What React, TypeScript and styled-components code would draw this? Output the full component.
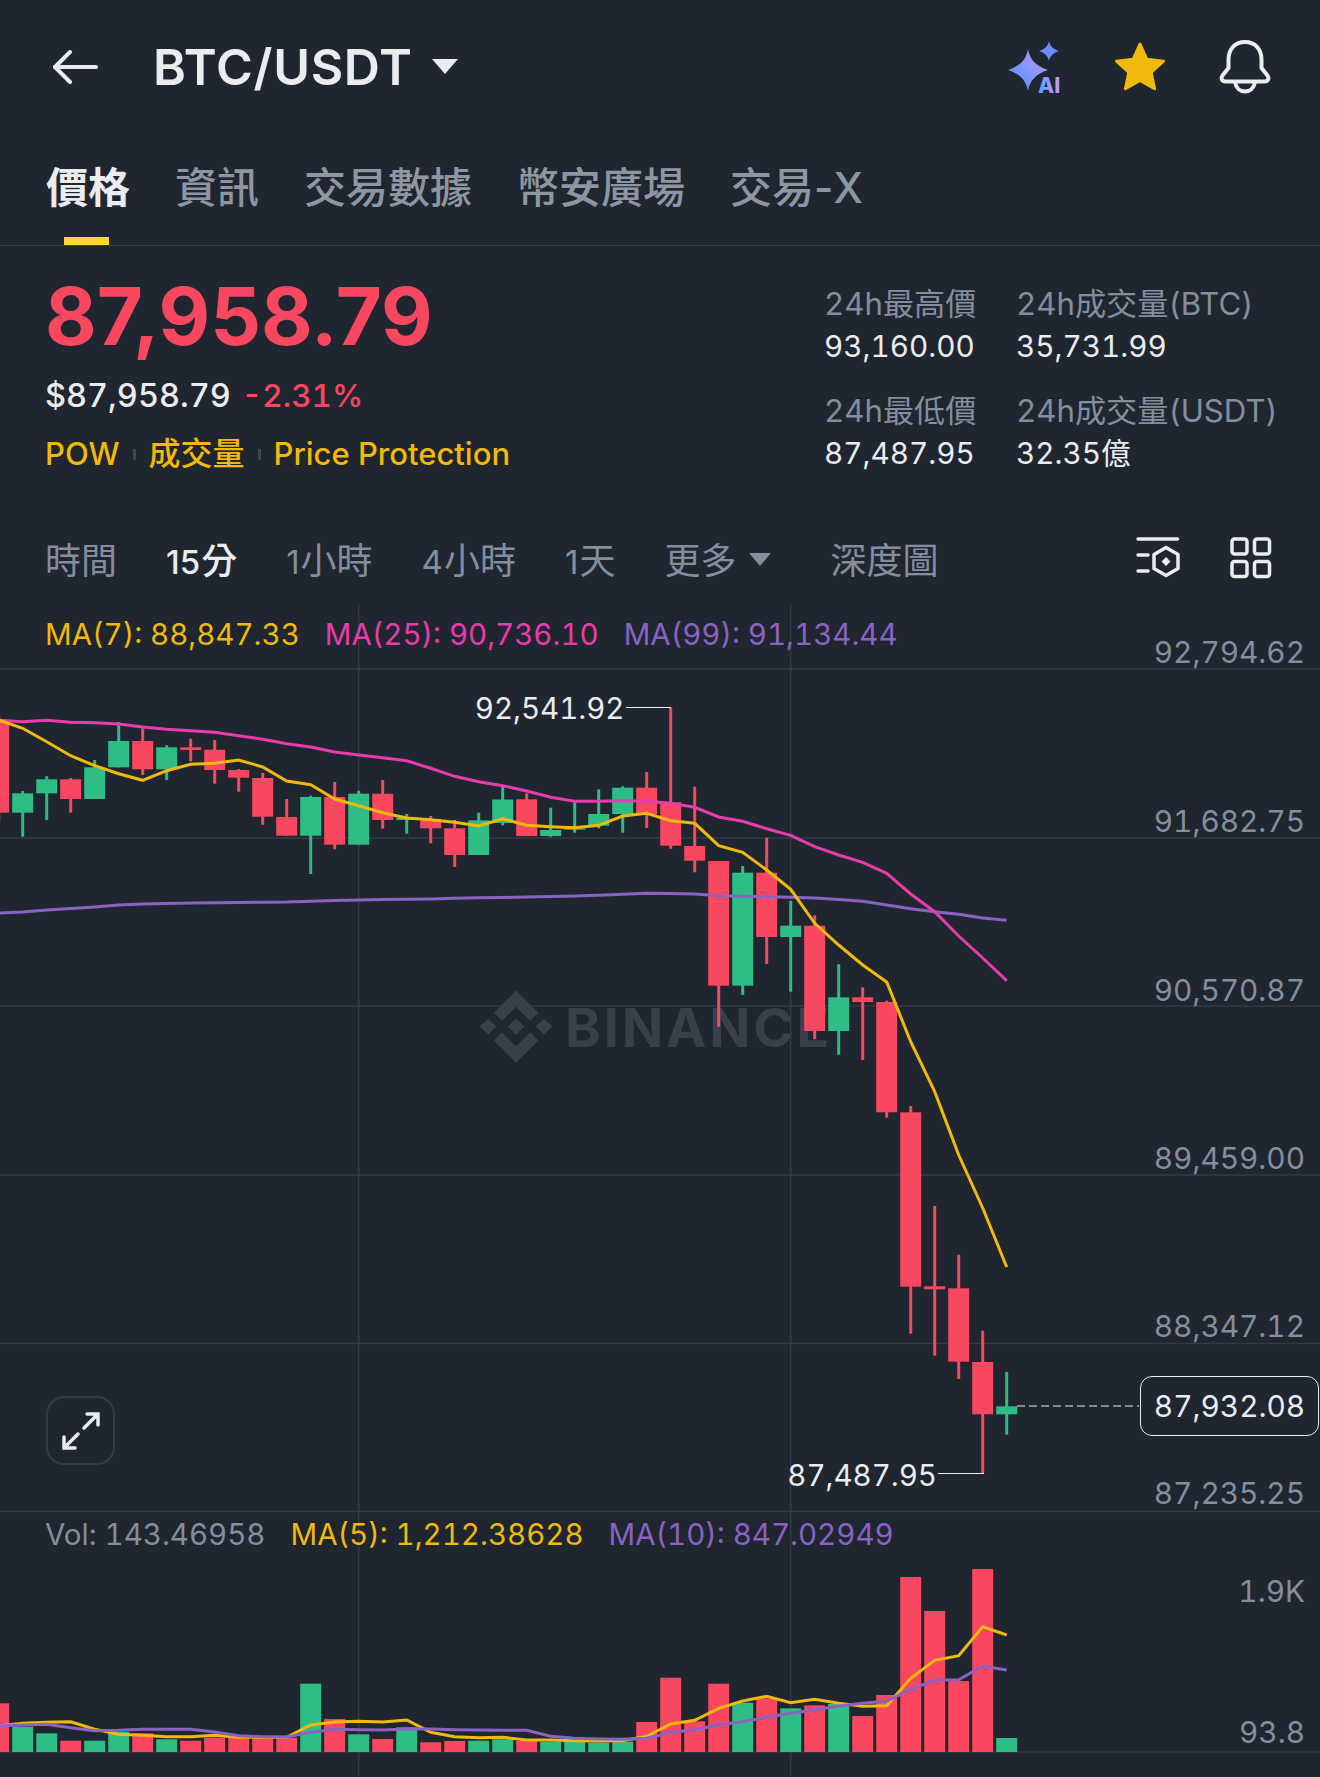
import React from 'react';
import styled, {createGlobalStyle} from 'styled-components';

const RED = '#F9475F';
const GREEN = '#2EBD85';
const YELLOW = '#F0B90B';
const PINK = '#E93CAC';
const PURPLE = '#8A62C2';
const GREY = '#848E9C';
const WHITE = '#EAECEF';
const GRID = '#333A46';

const GlobalStyle = createGlobalStyle`
  html, body {
    margin: 0;
    padding: 0;
    background: #1F2630;
  }
  body {
    font-family: Inter, "Noto Sans CJK TC", sans-serif;
    color: ${WHITE};
  }
`;

// candle: colour, body top, body bottom, wick top, wick bottom
type Candle = ['r' | 'g', number, number, number, number];

const candles: Candle[] = [
    ['r', 721, 812.7, 715, 821.7],
    ['g', 793.3, 812.7, 791, 836.7],
    ['g', 779.3, 793.3, 776.3, 820],
    ['r', 779.3, 799, 778, 812.7],
    ['g', 767.3, 799, 760, 799],
    ['g', 741, 767.3, 722, 767.3],
    ['r', 741, 769.3, 728.3, 775],
    ['g', 747.3, 769.3, 745.3, 780],
    ['r', 747.3, 750, 738.7, 761.3],
    ['r', 749.7, 770, 740, 783.7],
    ['r', 770, 777.7, 769, 791.7],
    ['r', 778, 816.7, 773, 824.7],
    ['r', 817, 835.7, 799, 835.7],
    ['g', 797, 835.7, 795.7, 874],
    ['r', 797, 844.7, 782, 849.3],
    ['g', 793.7, 844.7, 790.7, 844.7],
    ['r', 793.7, 820, 780, 828.7],
    ['g', 817.7, 820, 814, 833.7],
    ['r', 819, 828.3, 816, 843.3],
    ['r', 828.3, 855, 820, 867],
    ['g', 820.3, 855, 812.7, 855],
    ['g', 799.5, 823, 786, 825.3],
    ['r', 799.3, 836, 793.3, 836],
    ['g', 830, 836, 807.7, 836.7],
    ['g', 828.3, 829.7, 800.7, 832.7],
    ['g', 814, 825.7, 789.3, 828.3],
    ['g', 787.7, 814, 786.3, 832.7],
    ['r', 787.7, 814.3, 772, 828],
    ['r', 802.3, 845.7, 707.3, 848.7],
    ['r', 846, 860.7, 786.7, 872.3],
    ['r', 861, 985.7, 861, 1026.7],
    ['g', 872.7, 985.7, 866, 995],
    ['r', 872.7, 937, 837.7, 964],
    ['g', 925.7, 937, 901, 991.7],
    ['r', 925.7, 1031, 915.3, 1039.3],
    ['g', 997.3, 1031, 964.3, 1054.7],
    ['r', 997.3, 1002, 987.3, 1060],
    ['r', 1002, 1112.3, 1000.7, 1117.7],
    ['r', 1112.3, 1286.7, 1106, 1333.7],
    ['r', 1286.3, 1289.3, 1206, 1355.7],
    ['r', 1288.3, 1361.7, 1254.7, 1379],
    ['r', 1362, 1414.3, 1330.7, 1473.3],
    ['g', 1406.3, 1414.3, 1372, 1434.7],
];

const ma7 = [720, 728.3, 741.7, 755.7, 765.7, 773.7, 780.3, 770.7, 764.3, 763.3, 760, 767, 781, 784.7, 799, 805.7, 812.7, 818, 819.7, 822.3, 826,
    818.7, 825.3, 826.7, 827.7, 825.3, 816, 813.3, 820.7, 823.3, 845.7, 852.3, 870, 889.3, 923.3, 945, 965, 982, 1041.7, 1091.7, 1155, 1208, 1267];
const ma25 = [720.3, 721.7, 720.3, 722.3, 722.7, 724, 727, 729.3, 730.7, 732.3, 735.7, 739.3, 743.7, 747, 752, 755, 757.7, 760.7, 768.3, 776.3, 781.7,
    785.7, 791, 797.3, 801.3, 801.3, 800.7, 801.3, 803.3, 807.3, 817, 821.3, 828.7, 835.3, 846.7, 855, 862.3, 873.3, 894, 911.7, 936, 958, 980.7];
const ma99 = [913, 912, 910, 908.5, 907, 905, 904, 903.5, 903, 902.7, 902.5, 902.2, 902, 901.2, 900.5, 900, 899.5, 899.2, 899, 898.3, 897.7,
    897.5, 897, 896.5, 896, 895.3, 894.3, 893.3, 893.5, 894, 895.7, 896.3, 896.8, 897.3, 898, 899.5, 901.3, 905, 908.7, 911.7, 914.3, 918, 920.3];

const volumes: ['r' | 'g', number][] = [
    ['r', 1703.3], ['g', 1726.7], ['g', 1733.3], ['r', 1740.7], ['g', 1740.7], ['g', 1731.7], ['r', 1733.3], ['g', 1739.3], ['r', 1740.7],
    ['r', 1737.7], ['r', 1737.7], ['r', 1737.7], ['r', 1737.7], ['g', 1683.7], ['r', 1719], ['g', 1734.3], ['r', 1739], ['g', 1727.3],
    ['r', 1742.3], ['r', 1741], ['g', 1740.7], ['g', 1739.3], ['r', 1741], ['g', 1741.7], ['g', 1741.7], ['g', 1742.7], ['g', 1741.7],
    ['r', 1722], ['r', 1677.7], ['r', 1721.3], ['r', 1683.7], ['g', 1702.7], ['r', 1698.3], ['g', 1708.3], ['r', 1705.3], ['g', 1704],
    ['r', 1716], ['r', 1695], ['r', 1577], ['r', 1611], ['r', 1681], ['r', 1569], ['g', 1738],
];

const volMa5 = [1726, 1723.3, 1722.3, 1721.7, 1729.3, 1734.3, 1735.3, 1736.7, 1736.7, 1735.3, 1737.3, 1737.3, 1737.3, 1725, 1722, 1721.3, 1722, 1720, 1732.3, 1736.7, 1737.7,
    1737.3, 1740, 1740, 1740.7, 1741, 1740.7, 1736.3, 1724, 1720.3, 1708.3, 1701, 1696.3, 1702.7, 1699.3, 1703.3, 1706.3, 1705.7, 1678.3, 1660.3, 1655.7, 1626.7, 1635];
const volMa10 = [1725.7, 1725, 1724.3, 1727.7, 1730.7, 1730.3, 1729.3, 1729.3, 1729.3, 1732, 1735.7, 1736.7, 1737, 1732.3, 1729.3, 1729.7, 1730, 1729, 1729, 1729.7, 1730,
    1730.3, 1730.3, 1736.3, 1738.3, 1739, 1739.3, 1738.3, 1732.3, 1730, 1724.7, 1721.7, 1717.3, 1713.3, 1710, 1706, 1703.3, 1701, 1689.3, 1680, 1679.7, 1666, 1670];

const candleX = (i: number) => -1.3 + 24 * i;
const linePoints = (ys: number[]) => ys.map((y, i) => `${candleX(i)},${y}`).join(' ');
const colourOf = (c: 'r' | 'g') => (c === 'r' ? RED : GREEN);

const axisLabels = [
    {text: '92,794.62', y: 652},
    {text: '91,682.75', y: 821},
    {text: '90,570.87', y: 989.5},
    {text: '89,459.00', y: 1158},
    {text: '88,347.12', y: 1326},
    {text: '87,235.25', y: 1493},
    {text: '1.9K', y: 1591},
    {text: '93.8', y: 1732},
];

const Chart = () => (
    <ChartSvg viewBox="0 605 1320 1172" width={1320} height={1172}>
        {[669, 838, 1006, 1175, 1343.5, 1511.5, 1752].map(y => (
            <line key={y} x1={0} x2={1320} y1={y} y2={y} stroke={GRID} strokeWidth={1.5}/>
        ))}
        {[358.7, 790.7].map(x => (
            <line key={x} x1={x} x2={x} y1={605} y2={1777} stroke={GRID} strokeWidth={1.5}/>
        ))}

        {/* watermark sits under the candles */}
        <g transform="translate(480 990.5) scale(0.57)" fill="#3A404B">
            <path d="M38.73 53.2l24.59-24.58 24.6 24.6 14.3-14.31L63.32 0 24.42 38.9zM0 63.31l14.3-14.31 14.31 14.31-14.31 14.3zM38.73 73.41l24.59 24.59 24.6-24.6 14.31 14.29-38.9 38.91-38.91-38.88v-.03zM98 63.31l14.3-14.31 14.31 14.31-14.31 14.3zM77.83 63.3L63.32 48.78 52.59 59.51l-1.24 1.23-2.54 2.54 14.51 14.5 14.51-14.47z"/>
        </g>
        <Watermark x={565} y={1047}>BINANCE</Watermark>

        {candles.map(([c, top, bottom, high, low], i) => (
            <g key={i} fill={colourOf(c)}>
                <rect x={candleX(i) - 1.5} y={high} width={3} height={low - high}/>
                <rect x={candleX(i) - 10.5} y={top} width={21} height={bottom - top}/>
            </g>
        ))}

        <polyline points={linePoints(ma99)} fill="none" stroke={PURPLE} strokeWidth={3}/>
        <polyline points={linePoints(ma25)} fill="none" stroke={PINK} strokeWidth={3}/>
        <polyline points={linePoints(ma7)} fill="none" stroke={YELLOW} strokeWidth={3}/>

        <line x1={626} x2={671} y1={707.5} y2={707.5} stroke={WHITE} strokeWidth={1.2}/>
        <line x1={938} x2={984} y1={1473.5} y2={1473.5} stroke={WHITE} strokeWidth={1.2}/>
        <line x1={1017} x2={1139} y1={1406} y2={1406} stroke={WHITE} strokeWidth={1.2} strokeDasharray="8 4"/>

        {volumes.map(([c, top], i) => (
            <rect key={i} x={candleX(i) - 10.5} y={top} width={21} height={1752 - top} fill={colourOf(c)}/>
        ))}
        <polyline points={linePoints(volMa5)} fill="none" stroke={YELLOW} strokeWidth={3}/>
        <polyline points={linePoints(volMa10)} fill="none" stroke={PURPLE} strokeWidth={3}/>
    </ChartSvg>
);

const BackIcon = () => (
    <svg width="46" height="34" viewBox="0 0 46 34" fill="none" stroke={WHITE} strokeWidth="4" strokeLinecap="round" strokeLinejoin="round">
        <path d="M44 17H3"/>
        <path d="M18 2 3 17l15 15"/>
    </svg>
);

const AiIcon = () => (
    <svg width="62" height="62" viewBox="0 0 62 62">
        <defs>
            <linearGradient id="aiBig" x1="0" y1="1" x2="1" y2="0">
                <stop offset="0.2" stopColor="#5C93FF"/>
                <stop offset="1" stopColor="#C79AF4"/>
            </linearGradient>
            <linearGradient id="aiText" x1="0" y1="0" x2="1" y2="0">
                <stop offset="0" stopColor="#52A0FF"/>
                <stop offset="1" stopColor="#C79AF4"/>
            </linearGradient>
        </defs>
        <g transform="translate(0 4)">
            <path d="M22 9C24 20 30 26 42 30C30 34 24 40 22 51C20 40 14 34 2 30C14 26 20 20 22 9Z" fill="url(#aiBig)"/>
            <path d="M43 1C44 6 47 9 53 11C47 13 44 16 43 21C42 16 39 13 33 11C39 9 42 6 43 1Z" fill="#6C8CFF"/>
            <AiText x="32" y="53" fill="url(#aiText)">AI</AiText>
        </g>
    </svg>
);

const StarIcon = () => (
    <svg width="54" height="52" viewBox="0 0 54 52">
        <path d="M27 3 33.9 18.3 50.5 20.2 38.2 31.4 41.6 47.8 27 39.5 12.4 47.8 15.8 31.4 3.500 20.2 20.100 18.3Z"
              fill={YELLOW} stroke={YELLOW} strokeWidth="3" strokeLinejoin="round"/>
    </svg>
);

const BellIcon = () => (
    <svg width="52" height="54" viewBox="0 0 52 54" fill="none" stroke={WHITE} strokeWidth="4" strokeLinejoin="round" strokeLinecap="round">
        <path d="M26 2C15 2 9.500 10 9.500 20V28L3.500 35.500C1.500 38.500 3 41.500 6.500 41.500H45.500C49 41.500 50.500 38.500 48.500 35.500L42.500 28V20C42.500 10 37 2 26 2Z"/>
        <path d="M16 42C17 48 21 51.500 26 51.500C31 51.500 35 48 36 42"/>
    </svg>
);

const IndicatorIcon = () => (
    <svg width="44" height="44" viewBox="0 0 44 44" fill="none" stroke={WHITE} strokeWidth="3.500" strokeLinecap="round" strokeLinejoin="round">
        <path d="M2 3H41.500M2 19H12M2 35H12"/>
        <path d="M30 11.500 42 18.500V32.500L30 39.500 18 32.500V18.500Z"/>
        <path d="M30 21 34.500 25.500 30 30 25.500 25.500Z" fill={WHITE} stroke="none"/>
    </svg>
);

const GridIcon = () => (
    <svg width="42" height="42" viewBox="0 0 42 42" fill="none" stroke={WHITE} strokeWidth="3.500">
        <rect x="2" y="2" width="15" height="15" rx="2.500"/>
        <rect x="24.500" y="2" width="15" height="15" rx="2.500"/>
        <rect x="2" y="24.500" width="15" height="15" rx="2.500"/>
        <rect x="24.500" y="24.500" width="15" height="15" rx="2.500"/>
    </svg>
);

const ExpandIcon = () => (
    <svg width="42" height="42" viewBox="0 0 42 42" fill="none" stroke={WHITE} strokeWidth="3.500" strokeLinecap="round" strokeLinejoin="miter">
        <path d="M24 18 38 4M27 4H38V15"/>
        <path d="M18 24 4 38M4 27V38H15"/>
    </svg>
);

const App = () => {
    const tabs = ['價格', '資訊', '交易數據', '幣安廣場', '交易-X'];
    const ranges = [
        {num: '15', unit: '分', active: true},
        {num: '1', unit: '小時'},
        {num: '4', unit: '小時'},
        {num: '1', unit: '天'},
    ];
    return (
        <Page>
            <GlobalStyle/>
            <Header>
                <BackIcon/>
                <Title>BTC/USDT</Title>
                <TitleCaret/>
                <HeaderIcons>
                    <AiIcon/>
                    <StarIcon/>
                    <BellIcon/>
                </HeaderIcons>
            </Header>

            <Tabs>
                {tabs.map((tab, i) => <Tab key={tab} $active={i === 0}>{tab}</Tab>)}
            </Tabs>

            <Summary>
                <div>
                    <BigPrice>87,958.79</BigPrice>
                    <SubLine>
                        <span>$87,958.79</span>
                        <Change>-2.31%</Change>
                    </SubLine>
                    <TagRow>
                        <span>POW</span>
                        <TagDivider/>
                        <TagCjk>成交量</TagCjk>
                        <TagDivider/>
                        <span>Price Protection</span>
                    </TagRow>
                </div>
                <StatGrid>
                    <Stat><StatLabel>24h最高價</StatLabel><StatValue>93,160.00</StatValue></Stat>
                    <Stat><StatLabel>24h成交量(BTC)</StatLabel><StatValue>35,731.99</StatValue></Stat>
                    <Stat><StatLabel>24h最低價</StatLabel><StatValue>87,487.95</StatValue></Stat>
                    <Stat><StatLabel>24h成交量(USDT)</StatLabel><StatValue>32.35億</StatValue></Stat>
                </StatGrid>
            </Summary>

            <Toolbar>
                <Range>時間</Range>
                {ranges.map(r => (
                    <Range key={r.num + r.unit} $active={r.active}><RangeNum>{r.num}</RangeNum>{r.unit}</Range>
                ))}
                <Range>更多<SmallCaret/></Range>
                <Range>深度圖</Range>
                <ToolIcons>
                    <IndicatorIcon/>
                    <GridIcon/>
                </ToolIcons>
            </Toolbar>

            <ChartArea>
                <Chart/>
                <Legend $top={11}>
                    <LegendItem $color={YELLOW}>MA(7): 88,847.33</LegendItem>
                    <LegendItem $color={PINK}>MA(25): 90,736.10</LegendItem>
                    <LegendItem $color={PURPLE}>MA(99): 91,134.44</LegendItem>
                </Legend>
                <Legend $top={911}>
                    <LegendItem $color={GREY}>Vol: 143.46958</LegendItem>
                    <LegendItem $color={YELLOW}>MA(5): 1,212.38628</LegendItem>
                    <LegendItem $color={PURPLE}>MA(10): 847.02949</LegendItem>
                </Legend>
                <Legend $top={1170} $gap={130}>
                    <LegendItem $color={YELLOW}>MA(7)</LegendItem>
                    <LegendItem $color={PINK}>MA(25)</LegendItem>
                    <LegendItem $color={PURPLE}>MA(99)</LegendItem>
                </Legend>

                {axisLabels.map(label => <AxisLabel key={label.text} $y={label.y - 605}>{label.text}</AxisLabel>)}
                <PriceTag>87,932.08</PriceTag>
                <PointLabel $right={695.5} $y={102.500}>92,541.92</PointLabel>
                <PointLabel $right={383} $y={869.500}>87,487.95</PointLabel>
                <ExpandButton><ExpandIcon/></ExpandButton>
            </ChartArea>
        </Page>
    );
};

export default App;

const Page = styled.div`
  width: 1320px;
  height: 1777px;
  overflow: hidden;
  background: #1F2630;
`;
const Header = styled.div`
  height: 133px;
  display: flex;
  align-items: center;
  padding: 0 49px 0 52px;
  box-sizing: border-box;
`;
const Title = styled.div`
  margin-left: 55px;
  font-size: 50px;
  font-weight: 600;
  letter-spacing: 0.7px;
`;
const TitleCaret = styled.div`
  margin-left: 19px;
  width: 0;
  height: 0;
  border-left: 13px solid transparent;
  border-right: 13px solid transparent;
  border-top: 15px solid ${WHITE};
`;
const HeaderIcons = styled.div`
  margin-left: auto;
  display: flex;
  align-items: center;
  gap: 45px;

  & > svg:nth-child(2) {
    margin-right: 7px;
  }
`;
const AiText = styled.text`
  font-family: Inter, sans-serif;
  font-size: 21px;
  font-weight: 800;
`;
const Tabs = styled.div`
  height: 113px;
  box-sizing: border-box;
  display: flex;
  gap: 45px;
  padding-left: 46px;
  border-bottom: 1.5px solid ${GRID};
`;
const Tab = styled.div<{ $active?: boolean }>`
  position: relative;
  font-size: 42px;
  line-height: 110px;
  font-weight: ${props => props.$active ? 600 : 500};
  color: ${props => props.$active ? WHITE : '#8F96A1'};

  &::after {
    content: '';
    display: ${props => props.$active ? 'block' : 'none'};
    position: absolute;
    left: 18px;
    bottom: 0;
    width: 45px;
    height: 8px;
    background: #FCD535;
  }
`;
const Summary = styled.div`
  height: 269px;
  box-sizing: border-box;
  display: flex;
  justify-content: space-between;
  padding: 30px 46px 0 45px;
`;
const BigPrice = styled.div`
  font-size: 79.5px;
  line-height: 80px;
  font-weight: 700;
  color: ${RED};
`;
const SubLine = styled.div`
  margin-top: 20px;
  display: flex;
  align-items: baseline;
  gap: 11px;
  font-size: 32.5px;
  line-height: 40px;
  font-weight: 500;
  font-variant-numeric: tabular-nums;
`;
const Change = styled.span`
  color: ${RED};
  font-size: 31.5px;
`;
const TagRow = styled.div`
  margin-top: 18px;
  display: flex;
  align-items: center;
  gap: 13px;
  font-size: 31px;
  line-height: 40px;
  font-weight: 500;
  color: ${YELLOW};
`;
const TagCjk = styled.span`
  font-size: 32px;
`;
const TagDivider = styled.i`
  width: 3px;
  height: 11px;
  background: #3F4652;
`;
const StatGrid = styled.div`
  display: grid;
  grid-template-columns: 192px 258px;
  grid-auto-rows: 107px;
  padding-top: 10px;
`;
const Stat = styled.div`
  display: flex;
  flex-direction: column;
  gap: 6px;
  line-height: 36px;
  font-size: 29.7px;
  font-variant-numeric: tabular-nums;
  white-space: nowrap;
`;
const StatLabel = styled.div`
  color: ${GREY};
  font-size: 31.2px;
`;
const StatValue = styled.div`
  color: ${WHITE};
`;
const Toolbar = styled.div`
  height: 90px;
  box-sizing: border-box;
  display: flex;
  align-items: center;
  gap: 49px;
  padding: 0 48px 4px 45px;
`;
const Range = styled.div<{ $active?: boolean }>`
  display: flex;
  align-items: baseline;
  font-size: 36px;
  color: ${props => props.$active ? WHITE : GREY};
  font-weight: ${props => props.$active ? 500 : 400};
`;
const RangeNum = styled.span`
  font-size: 33px;
  margin-right: 1px;
`;
const SmallCaret = styled.i`
  align-self: center;
  margin: 2px 10px 0 13px;
  width: 0;
  height: 0;
  border-left: 11px solid transparent;
  border-right: 11px solid transparent;
  border-top: 13px solid ${GREY};
`;
const ToolIcons = styled.div`
  margin-left: auto;
  display: flex;
  align-items: center;
  gap: 50px;
`;
const ChartArea = styled.div`
  position: relative;
  height: 1172px;
  overflow: hidden;
  font-variant-numeric: tabular-nums;
`;
const ChartSvg = styled.svg`
  display: block;
`;
const Watermark = styled.text`
  font-family: Inter, sans-serif;
  font-size: 54px;
  font-weight: 700;
  letter-spacing: 3px;
  fill: #3A404B;
`;
const Legend = styled.div<{ $top: number; $gap?: number }>`
  position: absolute;
  left: 45px;
  top: ${props => props.$top}px;
  display: flex;
  gap: ${props => props.$gap ?? 25}px;
  font-size: 29.5px;
  line-height: 36px;
`;
const LegendItem = styled.span<{ $color: string }>`
  color: ${props => props.$color};
`;
const AxisLabel = styled.div<{ $y: number }>`
  position: absolute;
  right: 15px;
  top: ${props => props.$y - 18}px;
  font-size: 29.8px;
  line-height: 36px;
  color: ${GREY};
`;
const PriceTag = styled.div`
  position: absolute;
  left: 1140px;
  top: 771px;
  width: 179px;
  height: 60px;
  box-sizing: border-box;
  display: flex;
  align-items: center;
  justify-content: center;
  border: 1.5px solid ${WHITE};
  border-radius: 12px;
  background: #1F2630;
  font-size: 29.8px;
`;
const PointLabel = styled.div<{ $right: number; $y: number }>`
  position: absolute;
  right: ${props => props.$right}px;
  top: ${props => props.$y - 18}px;
  font-size: 29.5px;
  line-height: 36px;
`;
const ExpandButton = styled.div`
  position: absolute;
  left: 46px;
  top: 791px;
  width: 69px;
  height: 69px;
  box-sizing: border-box;
  display: flex;
  align-items: center;
  justify-content: center;
  border: 2.5px solid ${GRID};
  border-radius: 18px;
`;
